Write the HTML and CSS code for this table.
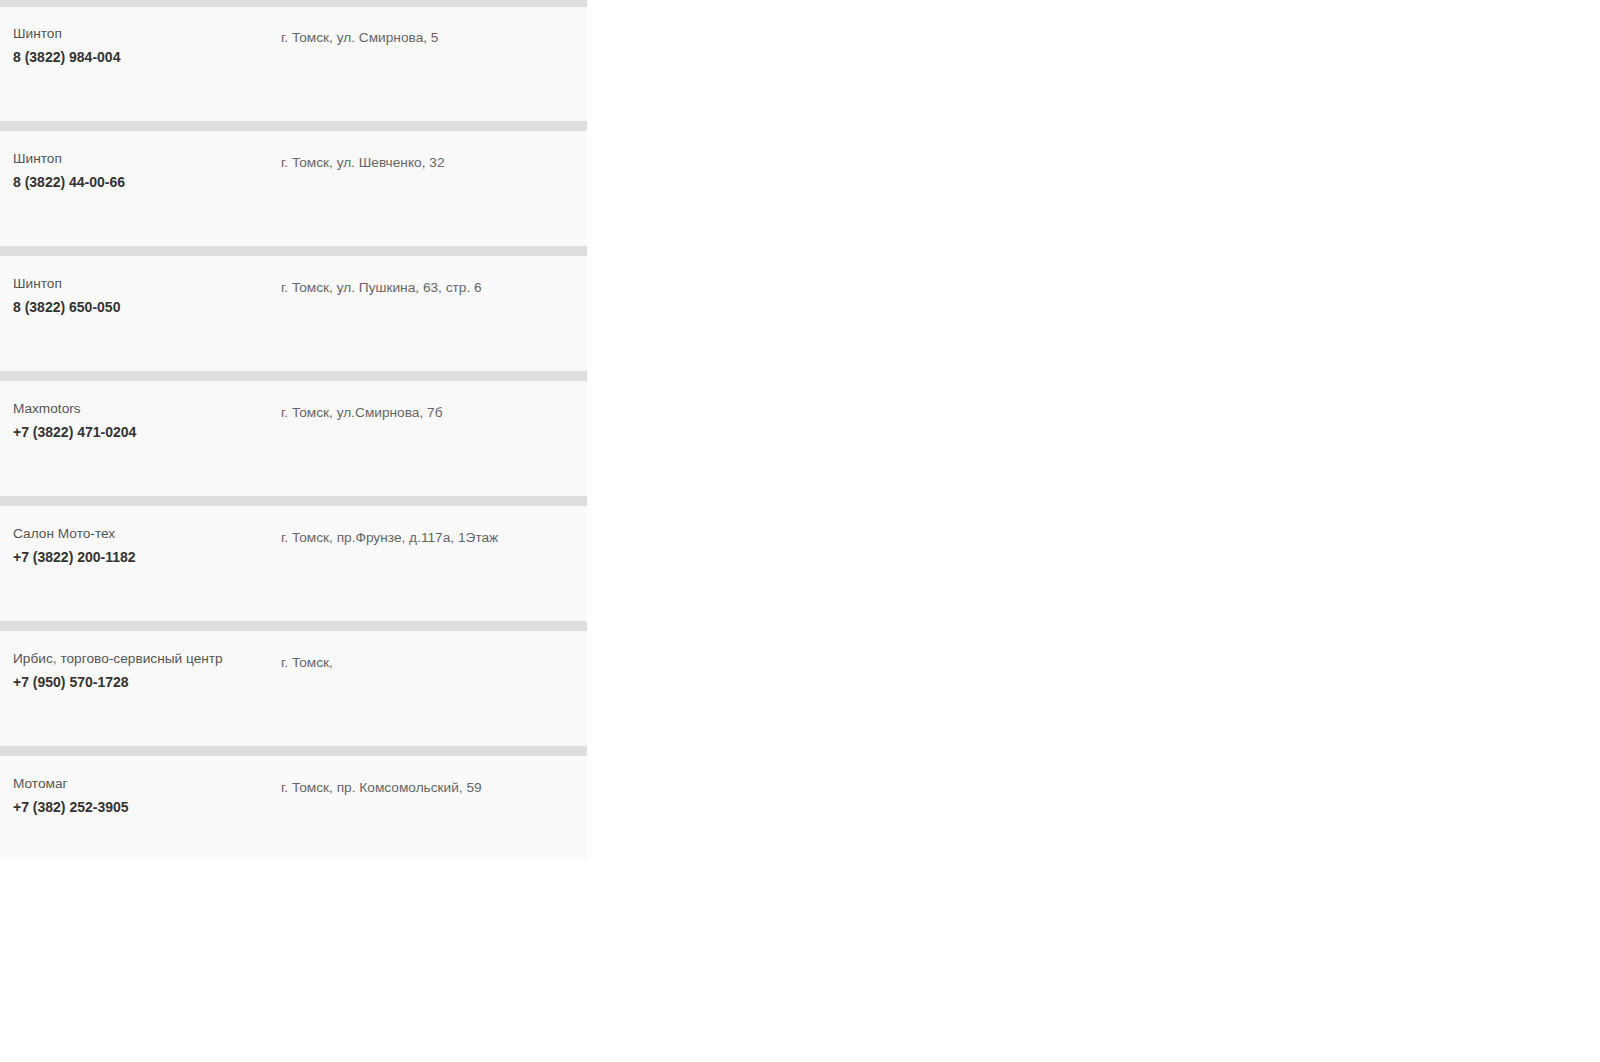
FILE: index.html
```html
<!DOCTYPE html>
<html lang="ru">
<head>
  <meta charset="UTF-8">
  <title>Магазины</title>
  <link rel="stylesheet" href="styles.css">
</head>
<body>
  <div class="shops">
    <div class="shop">
      <div class="shop-main">
        <div class="shop-name">Шинтоп</div>
        <div class="shop-phone">8 (3822) 984-004</div>
      </div>
      <div class="shop-address">г. Томск, ул. Смирнова, 5</div>
    </div>

    <div class="shop">
      <div class="shop-main">
        <div class="shop-name">Шинтоп</div>
        <div class="shop-phone">8 (3822) 44-00-66</div>
      </div>
      <div class="shop-address">г. Томск, ул. Шевченко, 32</div>
    </div>

    <div class="shop">
      <div class="shop-main">
        <div class="shop-name">Шинтоп</div>
        <div class="shop-phone">8 (3822) 650-050</div>
      </div>
      <div class="shop-address">г. Томск, ул. Пушкина, 63, стр. 6</div>
    </div>

    <div class="shop">
      <div class="shop-main">
        <div class="shop-name">Maxmotors</div>
        <div class="shop-phone">+7 (3822) 471-0204</div>
      </div>
      <div class="shop-address">г. Томск, ул.Смирнова, 7б</div>
    </div>

    <div class="shop">
      <div class="shop-main">
        <div class="shop-name">Салон Мото-тех</div>
        <div class="shop-phone">+7 (3822) 200-1182</div>
      </div>
      <div class="shop-address">г. Томск, пр.Фрунзе, д.117а, 1Этаж</div>
    </div>

    <div class="shop">
      <div class="shop-main">
        <div class="shop-name">Ирбис, торгово-сервисный центр</div>
        <div class="shop-phone">+7 (950) 570-1728</div>
      </div>
      <div class="shop-address">г. Томск,</div>
    </div>

    <div class="shop">
      <div class="shop-main">
        <div class="shop-name">Мотомаг</div>
        <div class="shop-phone">+7 (382) 252-3905</div>
      </div>
      <div class="shop-address">г. Томск, пр. Комсомольский, 59</div>
    </div>
  </div>
</body>
</html>
```

FILE: styles.css
```css
* {
  margin: 0;
  padding: 0;
  box-sizing: border-box;
}

body {
  font-family: "Liberation Sans", Arial, sans-serif;
  font-size: 14px;
  background: #fff;
}

/* List of shops */
.shops {
  width: 587px;
  height: 857px;
  overflow: hidden;
}

.shop {
  display: flex;
  height: 125px;
  padding: 18px 13px 0 13px;
  background-color: #f9f9f9;
  border-top: 10px solid #dedede;
}

.shop:first-child {
  height: 121px;
  padding-top: 17px;
  border-top-width: 7px;
}

.shop-main {
  width: 268px;
  flex-shrink: 0;
}

.shop-name {
  line-height: 20px;
  font-size: 13.7px;
  color: #555;
}

.shop-phone {
  margin-top: 3px;
  line-height: 20px;
  font-weight: bold;
  color: #333;
}

.shop-address {
  padding-top: 4px;
  line-height: 20px;
  font-size: 13.7px;
  color: #666;
}
```
